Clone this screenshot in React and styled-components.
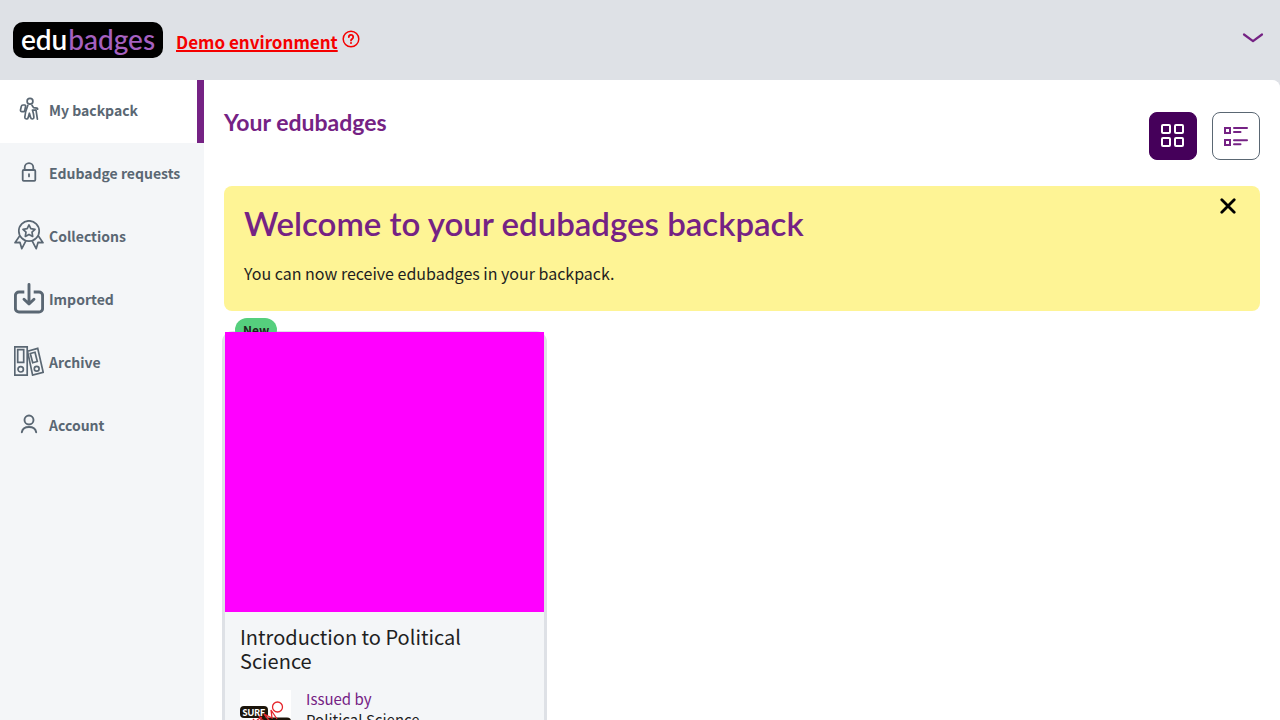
import React from "react";
import styled, { createGlobalStyle, css } from "styled-components";

const purple = "#752284";
const slate = "#5a6773";
const fog = "#f4f6f8";
const sans = `"Noto Sans CJK SC", "Noto Sans", sans-serif`;
const display = `Lato, "Open Sans", sans-serif`;

const GlobalStyle = createGlobalStyle`
  *, *::before, *::after { box-sizing: border-box; }
  body { margin: 0; background: #dee1e6; font-family: ${sans}; color: #1f1f1f; }
  h1, h2, h3, p, ul { margin: 0; padding: 0; }
  button { font: inherit; cursor: pointer; padding: 0; }
  svg { display: block; flex: none; }
`;

const Page = styled.div`
  min-height: 100vh;
  display: flex;
  flex-direction: column;
`;

const Header = styled.header`
  height: 80px;
  display: flex;
  align-items: center;
  padding: 0 16px 0 13px;
`;

const Logo = styled.a`
  width: 150px;
  height: 36px;
  display: flex;
  justify-content: center;
  gap: 1px;
  border-radius: 10px;
  background: #000;
  color: #fff;
  font: 600 28px/34px ${display};
  text-decoration: none;
  span { color: #a661c0; font-weight: 500; }
`;

const Environment = styled.div`
  display: flex;
  align-items: center;
  gap: 4px;
  margin-left: 13px;
  color: #f50000;
`;

const EnvironmentLink = styled.a`
  color: inherit;
  font-size: 17px;
  font-weight: 700;
  line-height: 26px;
  text-decoration-thickness: 2px;
  padding-top: 4px;
`;

const PlainButton = styled.button`
  border: 0;
  background: none;
  color: ${(p) => p.$color || "inherit"};
`;

const HelpButton = styled(PlainButton)`
  padding-bottom: 2px;
`;

const AccountMenu = styled(PlainButton)`
  margin-left: auto;
  padding-bottom: 4px;
`;

const Columns = styled.div`
  flex: 1;
  display: flex;
  background: ${fog};
  border-top-right-radius: 8px;
`;

const Sidebar = styled.nav`
  flex: none;
  width: 204px;
`;

const NavList = styled.ul`
  list-style: none;
`;

const NavLink = styled.a`
  height: 63px;
  display: flex;
  align-items: center;
  gap: 5px;
  padding: 0 0 4px 14px;
  color: ${slate};
  font-size: 14px;
  font-weight: 700;
  line-height: 22px;
  text-decoration: none;
  ${(p) => p.$active && css`
    background: #fff;
    border-right: 7px solid ${purple};
  `}
`;

const IconSlot = styled.span`
  width: 30px;
  display: flex;
  justify-content: center;
  padding-bottom: 2px;
`;

const Main = styled.main`
  flex: 1;
  min-width: 0;
  padding: 32px 20px 20px;
  background: #fff;
  border-top-right-radius: 8px;
`;

const TitleBar = styled.div`
  display: flex;
  justify-content: space-between;
  align-items: flex-start;
`;

const PageTitle = styled.h2`
  color: ${purple};
  font: 700 23px/20px ${display};
`;

const ViewSwitch = styled.div`
  display: flex;
  gap: 15px;
`;

const ViewButton = styled.button`
  width: 48px;
  height: 48px;
  display: flex;
  align-items: center;
  justify-content: center;
  border-radius: 8px;
  border: 1px solid ${(p) => (p.$active ? "#45005a" : slate)};
  background: ${(p) => (p.$active ? "#45005a" : "#fff")};
  color: ${(p) => (p.$active ? "#fff" : purple)};
`;

const Welcome = styled.section`
  display: flex;
  justify-content: space-between;
  align-items: flex-start;
  margin-top: 26px;
  padding: 12px 24px 25px 20px;
  border-radius: 8px;
  background: #fef495;
`;

const WelcomeTitle = styled.h1`
  color: ${purple};
  font: 600 33px/50px ${display};
`;

const WelcomeText = styled.p`
  margin-top: 12px;
  font-size: 16px;
  line-height: 26px;
`;

const Badges = styled.div`
  display: grid;
  grid-template-columns: repeat(auto-fill, 319px);
  gap: 20px;
  margin: 21px 1px 0;
`;

const Card = styled.article`
  position: relative;
  border-radius: 8px;
  background: ${fog};
  box-shadow: 0 2px 0 3px #dee1e6;
`;

const NewTag = styled.span`
  position: absolute;
  top: -14px;
  left: 10px;
  padding: 0 8px;
  border-radius: 12px;
  background: #55cf7d;
  font-size: 12px;
  font-weight: 700;
  line-height: 24px;
`;

const BadgeImage = styled.div`
  position: relative;
  height: 280px;
  background: #f0f;
`;

const CardBody = styled.div`
  padding: 13px 15px 20px;
`;

const BadgeName = styled.h3`
  max-width: 260px;
  font-size: 20px;
  font-weight: 400;
  line-height: 24px;
`;

const Issuer = styled.div`
  display: flex;
  gap: 15px;
  margin-top: 17px;
  font-size: 15px;
  line-height: 21px;
`;

const IssuerText = styled.div`
  margin-top: -2px;
`;

const IssuerLabel = styled.p`
  color: ${purple};
`;

const stroke = { fill: "none", stroke: "currentColor", strokeLinecap: "round", strokeLinejoin: "round" };

const Help = () => (
  <svg width="18" height="18" viewBox="0 0 18 18" {...stroke} strokeWidth="1.5" aria-hidden="true">
    <circle cx="9" cy="9" r="7.8" />
    <path d="M6.8 7a2.2 2.2 0 1 1 3.5 1.8C9.5 9.4 9 9.7 9 10.5" strokeWidth="1.8" />
    <path d="M9 13v.1" strokeWidth="2" />
  </svg>
);

const Chevron = () => (
  <svg width="22" height="12" viewBox="0 0 22 12" {...stroke} strokeWidth="2.2" aria-hidden="true">
    <path d="m2 2.5 9 6.7 9-6.7" />
  </svg>
);

const Backpacker = () => (
  <svg width="20" height="24" viewBox="0 0 20 24" {...stroke} strokeWidth="1.7" aria-hidden="true">
    <circle cx="11" cy="4.3" r="2.9" />
    <path d="M5.8 8H4a1.8 1.8 0 0 0-1.7 1.4L1.5 13A1.4 1.4 0 0 0 2.9 14.7h1.6A1.2 1.2 0 0 0 5.7 13.8L6.6 9.2A1 1 0 0 0 5.8 8Z" />
    <path d="M8.8 8.3C7.2 12 6 16 5.8 20.3c0 2.2 3 2.3 3.4.2l1.2-4.3 1.2 4.3c.5 2.1 3.4 1.9 3.3-.2-.1-2.6-.7-4.8-1.4-7M13 8.3l1.5 2.3 3.4.6c.5.1.8.6.7 1M13.4 13l3.4.2M17 13l1.4 9.2" />
  </svg>
);

const Lock = () => (
  <svg width="16" height="20" viewBox="0 0 16 20" {...stroke} strokeWidth="1.8" aria-hidden="true">
    <rect x="1.7" y="8" width="12.6" height="10.8" rx="1" />
    <path d="M3.7 8V5.4a4.3 4.3 0 0 1 8.6 0V8M8 12.2v2.2" />
  </svg>
);

const Rosette = () => (
  <svg width="30" height="30" viewBox="0 0 30 30" {...stroke} strokeWidth="1.7" aria-hidden="true">
    <circle cx="15" cy="11" r="10.2" />
    <path d="m15 4.9 1.8 3.8 4.2.6-3 2.9.7 4.2-3.7-2-3.7 2 .7-4.2-3-2.9 4.2-.6ZM5.6 16 1 22.7l5-.3 1.8 6.3 4.2-8M24.4 16l4.6 6.7-5-.3-1.8 6.3-4.2-8" />
  </svg>
);

const ImportTray = () => (
  <svg width="30" height="32" viewBox="0 0 30 32" {...stroke} strokeWidth="2.9" aria-hidden="true">
    <path d="M10.3 10H5a3.6 3.6 0 0 0-3.6 3.6v12.8A3.6 3.6 0 0 0 5 30h20a3.6 3.6 0 0 0 3.6-3.6V13.6A3.6 3.6 0 0 0 25 10h-5.3" strokeLinecap="butt" />
    <path d="M15 2.5v18.7M10 17.2l5 4.8 5-4.8" />
  </svg>
);

const Binders = () => (
  <svg width="30" height="30" viewBox="0 0 30 30" fill="none" stroke="currentColor" strokeWidth="1.7" aria-hidden="true">
    <path d="M.8.8h12.4v28.4H.8ZM3.7 3.7h6v12.6h-6ZM13.5 5.2l10.2-2.8 5.5 24-10.6 2.7ZM16.3 7.5l4.7-1.2 2.3 9.2-4.6 1.2Z" />
    <circle cx="6.7" cy="23.3" r="2.7" />
    <circle cx="22.7" cy="22.8" r="2.4" />
  </svg>
);

const Person = () => (
  <svg width="18" height="20" viewBox="0 0 18 20" {...stroke} strokeWidth="1.9" aria-hidden="true">
    <circle cx="9" cy="6" r="4.5" />
    <path d="M1.8 18.2C2.5 14.6 5.4 13 9 13s6.5 1.6 7.2 5.2" />
  </svg>
);

const GridIcon = () => (
  <svg width="24" height="24" viewBox="0 0 24 24" fill="none" stroke="currentColor" strokeWidth="2" aria-hidden="true">
    <rect x="1" y="1" width="8" height="8" rx="1" />
    <rect x="14" y="1" width="8" height="8" rx="1" />
    <rect x="1" y="14" width="8" height="8" rx="1" />
    <rect x="14" y="14" width="8" height="8" rx="1" />
  </svg>
);

const ListIcon = () => (
  <svg width="24" height="20" viewBox="0 0 24 20" fill="none" stroke="currentColor" strokeWidth="2" aria-hidden="true">
    <path d="M1 2H6V7H1ZM1 14H6V19H1Z" />
    <path d="M10 2h13M10 6h6.5M10 14.3h13M10 18.3h6.5" strokeLinecap="round" />
  </svg>
);

const CloseIcon = () => (
  <svg width="16" height="16" viewBox="0 0 16 16" {...stroke} strokeWidth="2.8" aria-hidden="true">
    <path d="m1.8 1.8 12.4 12.4M14.2 1.8 1.8 14.2" />
  </svg>
);

const IssuerLogo = () => (
  <svg width="51" height="51" viewBox="0 0 51 51" role="img" aria-label="SURF demo">
    <rect width="51" height="51" fill="#fff" />
    <rect x="0" y="16" width="28" height="12" rx="4" fill="#1c150b" />
    <rect x="20" y="27.5" width="31" height="12" rx="4" fill="#1c150b" />
    <text x="2.5" y="25.5" fill="#fff" fontFamily="Lato, sans-serif" fontWeight="900" fontSize="9">SURF</text>
    <g fill="none" stroke="#e5262c" strokeWidth="1.3">
      <circle cx="37.5" cy="17" r="5" />
      <path d="m37 29-6-9 1 8-8-4 7 9M24 32l-5-6M19 36l-6-7M17 30l5-3M20 33l4-3" />
    </g>
  </svg>
);

const navItems = [
  ["My backpack", Backpacker],
  ["Edubadge requests", Lock],
  ["Collections", Rosette],
  ["Imported", ImportTray],
  ["Archive", Binders],
  ["Account", Person],
];

export default function App() {
  return (
    <Page>
      <GlobalStyle />
      <Header>
        <Logo href="#">edu<span>badges</span></Logo>
        <Environment>
          <EnvironmentLink href="#">Demo environment</EnvironmentLink>
          <HelpButton aria-label="About this environment"><Help /></HelpButton>
        </Environment>
        <AccountMenu $color={purple} aria-label="Open menu"><Chevron /></AccountMenu>
      </Header>
      <Columns>
        <Sidebar aria-label="Backpack">
          <NavList>
            {navItems.map(([label, Icon], i) => (
              <li key={label}>
                <NavLink href="#" $active={i === 0} aria-current={i === 0 ? "page" : undefined}>
                  <IconSlot><Icon /></IconSlot>
                  {label}
                </NavLink>
              </li>
            ))}
          </NavList>
        </Sidebar>
        <Main>
          <TitleBar>
            <PageTitle>Your edubadges</PageTitle>
            <ViewSwitch>
              <ViewButton $active aria-label="Grid view" aria-pressed="true"><GridIcon /></ViewButton>
              <ViewButton aria-label="List view" aria-pressed="false"><ListIcon /></ViewButton>
            </ViewSwitch>
          </TitleBar>
          <Welcome>
            <div>
              <WelcomeTitle>Welcome to your edubadges backpack</WelcomeTitle>
              <WelcomeText>You can now receive edubadges in your backpack.</WelcomeText>
            </div>
            <PlainButton $color="#000" aria-label="Close"><CloseIcon /></PlainButton>
          </Welcome>
          <Badges>
            <Card>
              <NewTag>New</NewTag>
              <BadgeImage />
              <CardBody>
                <BadgeName>Introduction to Political Science</BadgeName>
                <Issuer>
                  <IssuerLogo />
                  <IssuerText>
                    <IssuerLabel>Issued by</IssuerLabel>
                    <p>Political Science</p>
                  </IssuerText>
                </Issuer>
              </CardBody>
            </Card>
          </Badges>
        </Main>
      </Columns>
    </Page>
  );
}
